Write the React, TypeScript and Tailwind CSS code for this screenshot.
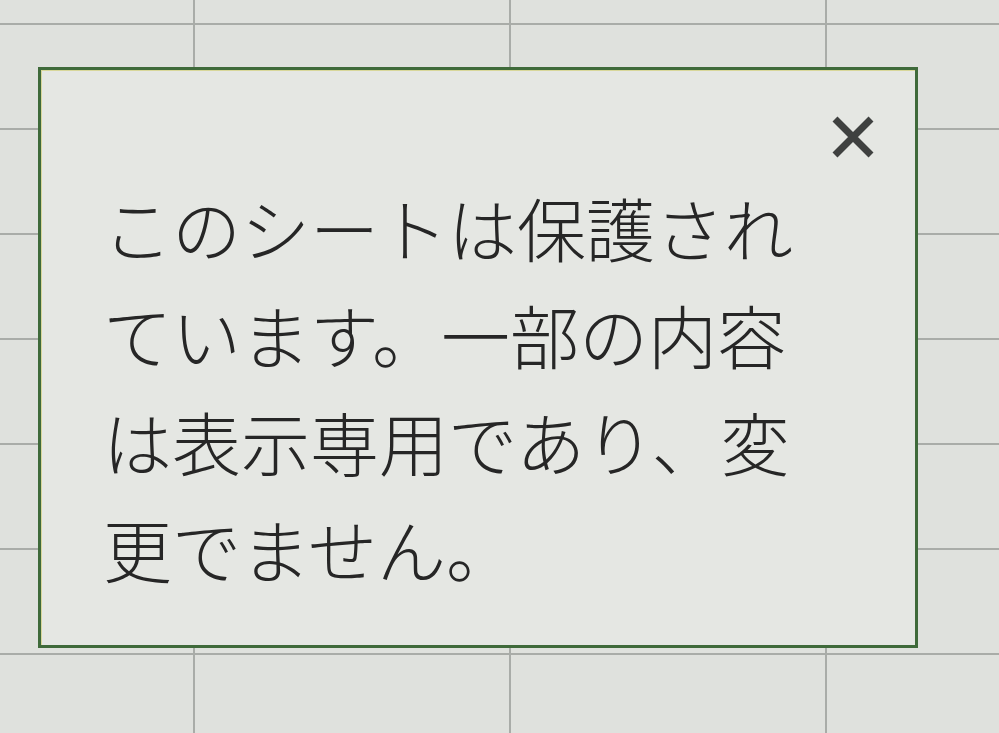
import React from 'react';

const rows = [25, 105, 105, 105, 105, 105, 105, 105];
const cols = [195, 316, 316, 316];

const lines = ['このシートは保護され', 'ています。一部の内容', 'は表示専用であり、変', '更でません。'];

function SheetGrid() {
  return (
    <div className="flex flex-col">
      {rows.map((h, r) => (
        <div key={r} className="flex shrink-0" style={{ height: h }}>
          {cols.map((w, c) => (
            <div
              key={c}
              className="shrink-0 border-r-[2px] border-b-[2px] border-[#a9aca8]"
              style={{ width: w }}
            />
          ))}
        </div>
      ))}
    </div>
  );
}

function CloseIcon() {
  return (
    <svg width="44" height="42" viewBox="0 0 44 42" fill="none">
      <path d="M4 3 L40 39 M40 3 L4 39" stroke="#3f4140" strokeWidth="7" strokeLinecap="butt" />
    </svg>
  );
}

export default function App() {
  return (
    <div className="relative h-[733px] w-[999px] overflow-hidden bg-[#dfe1dd]">
      <SheetGrid />
      <div className="absolute left-[38px] top-[67px] h-[581px] w-[880px] border-[3px] border-[#3f6a3a] bg-[#e5e7e3] shadow-[inset_1px_1px_0_#d8d79a]">
        <div className="flex justify-end pr-[40px] pt-[46px]">
          <CloseIcon />
        </div>
        <div
          className="mt-[16px] ml-[62px] text-[69px] font-light leading-[107px] whitespace-nowrap text-[#262626]"
          style={{ fontFamily: '"Noto Sans CJK JP", sans-serif' }}
        >
          {lines.map((l) => (
            <div key={l}>{l}</div>
          ))}
        </div>
      </div>
    </div>
  );
}
